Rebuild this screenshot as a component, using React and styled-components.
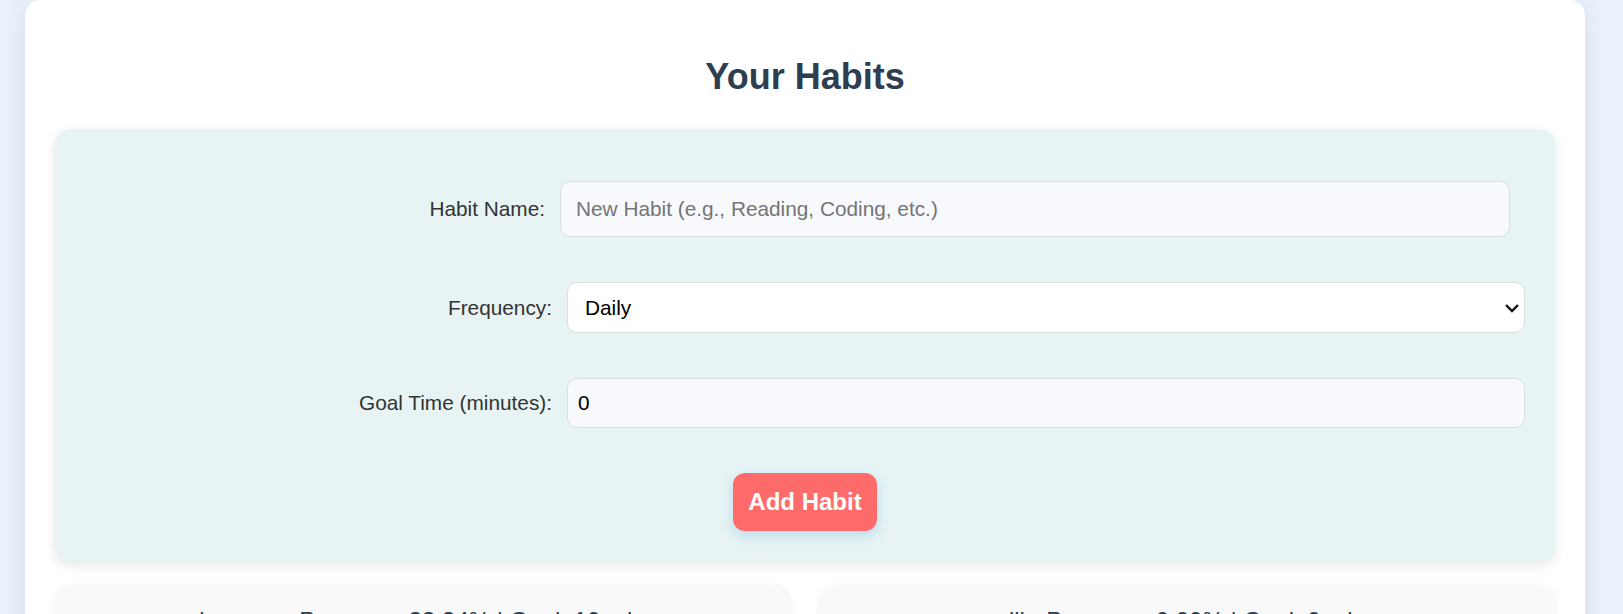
import React, { useState } from 'react';
import styled, { createGlobalStyle } from 'styled-components';

const GlobalStyle = createGlobalStyle`
  html, body {
    margin: 0;
    padding: 0;
  }
  body {
    background: #e9f1fb;
    font-family: "Liberation Sans", Arial, sans-serif;
    color: #333;
  }
`;

const Page = styled.div`
  padding: 0 0 40px 25px;
`;

const Container = styled.div`
  width: 1560px;
  box-sizing: border-box;
  padding: 30px;
  background: #fff;
  border-radius: 15px;
  box-shadow: 0 4px 20px rgba(60, 80, 120, 0.12);
`;

const Title = styled.h2`
  margin: 26px 0 31px;
  text-align: center;
  font-size: 36px;
  font-weight: bold;
  color: #2c3e50;
`;

const FormPanel = styled.form`
  display: flex;
  flex-direction: column;
  gap: 45px;
  padding: 52px 30px 30px;
  background: #e8f4f4;
  border-radius: 15px;
  box-shadow: 0 4px 12px rgba(0, 0, 0, 0.1);
`;

const Row = styled.div`
  display: flex;
  align-items: center;
  gap: 15px;
`;

const Label = styled.label`
  flex: 1;
  text-align: right;
  font-size: 20.8px;
  color: #333;
`;

const TextInput = styled.input`
  box-sizing: border-box;
  width: ${(p) => p.$width}px;
  margin-right: ${(p) => p.$inset || 0}px;
  padding: ${(p) => p.$pad};
  font-family: inherit;
  font-size: 20.8px;
  color: #000;
  background: #f7f9fc;
  border: 1px solid #ddd;
  border-radius: 10px;
  outline: none;

  &::placeholder {
    color: #757575;
  }
  &::-webkit-inner-spin-button,
  &::-webkit-outer-spin-button {
    -webkit-appearance: none;
    margin: 0;
  }
`;

const SelectWrap = styled.div`
  position: relative;
  width: 958px;
`;

const Select = styled.select`
  appearance: none;
  -webkit-appearance: none;
  box-sizing: border-box;
  width: 100%;
  padding: 13px 40px 13px 17px;
  font-family: inherit;
  font-size: 20.8px;
  color: #000;
  background: #fff;
  border: 1px solid #ddd;
  border-radius: 10px;
  outline: none;
`;

const Chevron = styled.svg`
  position: absolute;
  right: 6px;
  top: 50%;
  width: 14px;
  height: 14px;
  margin-top: -7px;
  pointer-events: none;
`;

const AddButton = styled.button`
  align-self: center;
  padding: 15px;
  font-family: inherit;
  font-size: 24px;
  font-weight: bold;
  color: #fff;
  background: #ff6b6b;
  border: none;
  border-radius: 12px;
  box-shadow: 0 5px 14px rgba(52, 152, 219, 0.25);
  cursor: pointer;
`;

const HabitGrid = styled.div`
  display: grid;
  grid-template-columns: 1fr 1fr;
  gap: 30px;
  margin-top: 24px;
`;

const HabitCard = styled.div`
  padding: 22px 20px 20px;
  background: #f9f9f9;
  border-radius: 15px;
  box-shadow: 0 2px 8px rgba(0, 0, 0, 0.06);
  text-align: center;
`;

const HabitLine = styled.p`
  margin: 0 0 14px;
  font-size: 24px;
  color: #2c3e50;
`;

const Track = styled.div`
  height: 12px;
  background: #e0e0e0;
  border-radius: 6px;
  overflow: hidden;
`;

const Fill = styled.div`
  height: 100%;
  background: #4caf50;
`;

const habits = [
  { name: 'journey', progress: 33.34, goal: 10 },
  { name: 'ill', progress: 0, goal: 0 },
];

export default function App() {
  const [name, setName] = useState('');
  const [frequency, setFrequency] = useState('Daily');
  const [goal, setGoal] = useState(0);

  return (
    <>
      <GlobalStyle />
      <Page>
        <Container>
          <Title>Your Habits</Title>
          <FormPanel onSubmit={(e) => e.preventDefault()}>
            <Row>
              <Label>Habit Name:</Label>
              <TextInput
                type="text"
                $width={950}
                $inset={15}
                $pad="15px 15px"
                placeholder="New Habit (e.g., Reading, Coding, etc.)"
                value={name}
                onChange={(e) => setName(e.target.value)}
              />
            </Row>
            <Row>
              <Label>Frequency:</Label>
              <SelectWrap>
                <Select value={frequency} onChange={(e) => setFrequency(e.target.value)}>
                  <option>Daily</option>
                  <option>Weekly</option>
                  <option>Monthly</option>
                </Select>
                <Chevron viewBox="0 0 14 14">
                  <path d="M1 4 L7 10 L13 4" fill="none" stroke="#111" strokeWidth="2.4" />
                </Chevron>
              </SelectWrap>
            </Row>
            <Row>
              <Label>Goal Time (minutes):</Label>
              <TextInput
                type="number"
                $width={958}
                $pad="12px 10px"
                value={goal}
                onChange={(e) => setGoal(e.target.value)}
              />
            </Row>
            <AddButton type="submit">Add Habit</AddButton>
          </FormPanel>
          <HabitGrid>
            {habits.map((h) => (
              <HabitCard key={h.name}>
                <HabitLine>
                  {h.name} - Progress: {h.progress.toFixed(2)}% | Goal: {h.goal} min
                </HabitLine>
                <Track>
                  <Fill style={{ width: `${h.progress}%` }} />
                </Track>
              </HabitCard>
            ))}
          </HabitGrid>
        </Container>
      </Page>
    </>
  );
}
